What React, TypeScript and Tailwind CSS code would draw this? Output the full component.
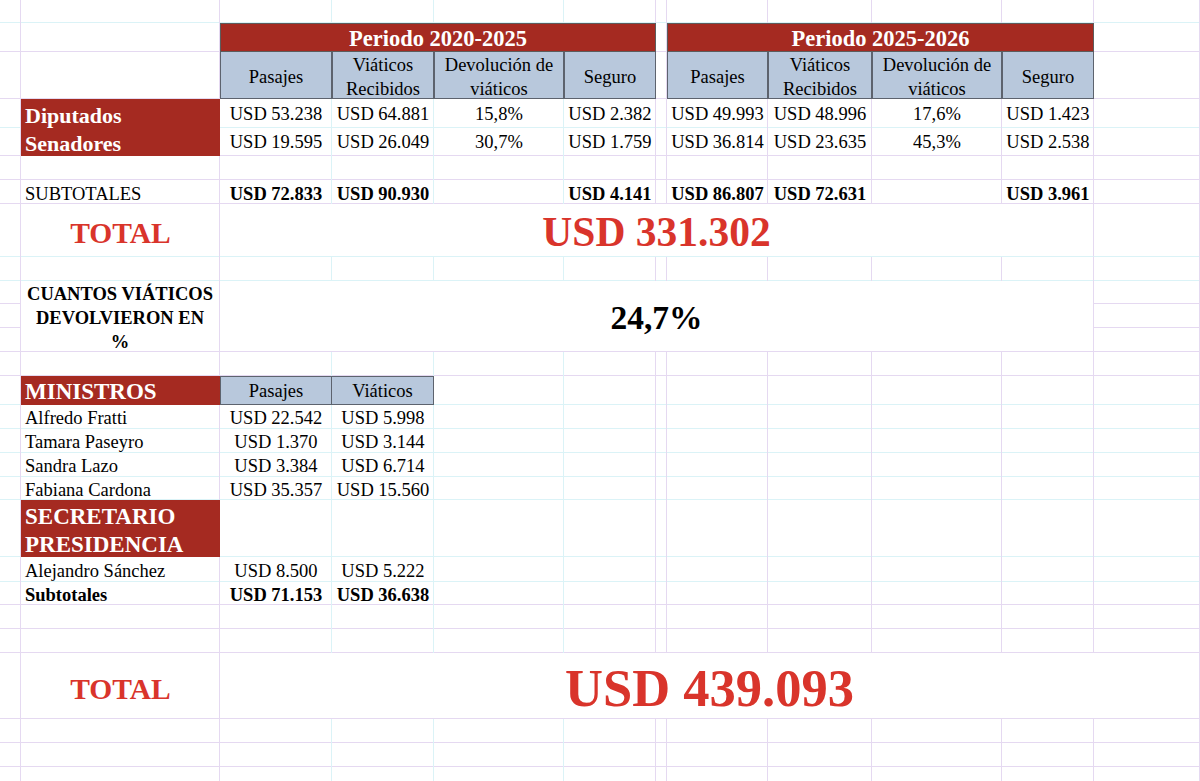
// Hoja de cálculo: viáticos y pasajes de legisladores y ministros.

const RED = "bg-[#a52a21]";

// color de la línea de cuadrícula de cada fila / columna (p = lila, c = celeste)
const ROW_LINES = "cppcpppccppppcccccccppppppp".split("");
const COL_LINES = "ppcccppppppp".split("");

const HEADERS = [["Pasajes"], ["Viáticos", "Recibidos"], ["Devolución de", "viáticos"], ["Seguro"]];

type Period = {
  title: string;
  grid: string;
  rows: string[][];
  totals: string[];
};

const PERIODS: Period[] = [
  {
    title: "Periodo 2020-2025",
    grid: "col-[3/7] row-[2/8] grid grid-cols-[112px_102px_130px_92px] grid-rows-[29px_47px_29px_28px_24px_24px]",
    rows: [
      ["USD 53.238", "USD 64.881", "15,8%", "USD 2.382"],
      ["USD 19.595", "USD 26.049", "30,7%", "USD 1.759"],
    ],
    totals: ["USD 72.833", "USD 90.930", "", "USD 4.141"],
  },
  {
    title: "Periodo 2025-2026",
    grid: "col-[8/12] row-[2/8] grid grid-cols-[101px_104px_130px_92px] grid-rows-[29px_47px_29px_28px_24px_24px]",
    rows: [
      ["USD 49.993", "USD 48.996", "17,6%", "USD 1.423"],
      ["USD 36.814", "USD 23.635", "45,3%", "USD 2.538"],
    ],
    totals: ["USD 86.807", "USD 72.631", "", "USD 3.961"],
  },
];

const MINISTROS = [
  ["Alfredo Fratti", "USD 22.542", "USD 5.998"],
  ["Tamara Paseyro", "USD 1.370", "USD 3.144"],
  ["Sandra Lazo", "USD 3.384", "USD 6.714"],
  ["Fabiana Cardona", "USD 35.357", "USD 15.560"],
];

function PeriodBlock({ title, grid, rows, totals }: Period) {
  return (
    <div className={grid}>
      <div
        className={joinClasses(
          "col-span-4 flex items-center justify-center border border-[#5c5c5c] pt-[3px] text-[22.5px] font-bold text-white",
          RED,
        )}
      >
        {title}
      </div>
      {HEADERS.map((lines) => (
        <div
          key={lines[0]}
          className="flex flex-col items-center justify-center border-x border-b border-[#5d636e] bg-[#b8c8dc] pt-[3px] leading-[24px]"
        >
          {lines.map((l) => (
            <span key={l}>{l}</span>
          ))}
        </div>
      ))}
      {rows.flat().map((v, i) => (
        <div key={i} className="flex items-center justify-center whitespace-nowrap pt-[2px]">
          {v}
        </div>
      ))}
      <div className="col-span-4" />
      {totals.map((v, i) => (
        <div key={i} className="flex items-center justify-center whitespace-nowrap pt-[5px] font-bold">
          {v}
        </div>
      ))}
    </div>
  );
}

export default function App() {
  return (
    <div className="h-[781px] w-[1200px] overflow-hidden bg-white font-['Liberation_Serif','Times_New_Roman',serif] text-[18.5px] text-black">
      <div className="grid h-[791px] grid-cols-[21px_199px_112px_102px_130px_92px_11px_101px_104px_130px_92px_106px] grid-rows-[23px_29px_47px_29px_28px_24px_24px_53px_24px_23px_24px_24px_24px_29px_24px_24px_24px_23px_57px_25px_23px_24px_24px_66px_24px_24px_24px]">
        {/* cuadrícula */}
        {ROW_LINES.map((t, i) => (
          <div
            key={"r" + i}
            className={joinClasses("col-[1/-1] border-b", t === "p" ? "border-b-[#e5d9f1]" : "border-b-[#dbf3f7]")}
            style={{ gridRow: i + 1 }}
          />
        ))}
        {COL_LINES.map((t, i) => (
          <div
            key={"c" + i}
            className={joinClasses("row-[1/-1] border-r", t === "p" ? "border-r-[#e5d9f1]" : "border-r-[#dbf3f7]")}
            style={{ gridColumn: i + 1 }}
          />
        ))}

        {/* legisladores */}
        <div className={joinClasses("col-[2/3] row-[4/5] flex items-center pl-1 pt-[3px] text-[22px] font-bold text-white", RED)}>
          Diputados
        </div>
        <div className={joinClasses("col-[2/3] row-[5/6] flex items-center pl-1 pt-[3px] text-[22px] font-bold text-white", RED)}>
          Senadores
        </div>
        {PERIODS.map((p) => (
          <PeriodBlock key={p.title} {...p} />
        ))}
        <div className="col-[2/3] row-[7/8] flex items-center pl-1 pt-[5px]">SUBTOTALES</div>

        <div className="col-[2/3] row-[8/9] flex items-center justify-center pt-[5px] text-[29.5px] font-bold text-[#d9342b]">
          TOTAL
        </div>
        <div className="col-[3/12] row-[8/9] flex items-center justify-center border-r border-b border-r-[#e5d9f1] border-b-[#dbf3f7] bg-white pt-[5px] text-[41.5px] font-bold text-[#d9342b]">
          USD 331.302
        </div>

        <div className="col-[2/3] row-[10/13] flex items-center justify-center border-r border-b border-[#e5d9f1] bg-white pt-[4px] text-center font-bold leading-[24px]">
          CUANTOS VIÁTICOS
          <br />
          DEVOLVIERON EN
          <br />%
        </div>
        <div className="col-[3/12] row-[10/13] flex items-center justify-center border-r border-b border-[#e5d9f1] bg-white pt-[4px] text-[33.5px] font-bold">
          24,7%
        </div>

        {/* ministros */}
        <div className="col-[2/5] row-[14/22] grid grid-cols-[199px_112px_102px] grid-rows-[29px_24px_24px_24px_23px_57px_25px_23px]">
          <div className={joinClasses("flex items-center pl-1 pt-[4px] text-[23px] font-bold text-white", RED)}>MINISTROS</div>
          <div className="flex items-center justify-center border border-[#5d636e] bg-[#b8c8dc] pt-[3px]">Pasajes</div>
          <div className="flex items-center justify-center border border-l-0 border-[#5d636e] bg-[#b8c8dc] pt-[3px]">
            Viáticos
          </div>
          {MINISTROS.flat().map((v, i) => (
            <div
              key={i}
              className={joinClasses("flex items-center whitespace-nowrap pt-[4px]", i % 3 === 0 ? "pl-1" : "justify-center")}
            >
              {v}
            </div>
          ))}
          <div
            className={joinClasses(
              "flex flex-col justify-center pl-1 pt-[4px] text-[23px] font-bold leading-[28px] text-white",
              RED,
            )}
          >
            <span>SECRETARIO</span>
            <span>PRESIDENCIA</span>
          </div>
          <div />
          <div />
          <div className="flex items-center pl-1 pt-[4px]">Alejandro Sánchez</div>
          <div className="flex items-center justify-center pt-[4px]">USD 8.500</div>
          <div className="flex items-center justify-center pt-[4px]">USD 5.222</div>
          <div className="flex items-center pl-1 pt-[4px] font-bold">Subtotales</div>
          <div className="flex items-center justify-center whitespace-nowrap pt-[4px] font-bold">USD 71.153</div>
          <div className="flex items-center justify-center whitespace-nowrap pt-[4px] font-bold">USD 36.638</div>
        </div>

        <div className="col-[2/3] row-[24/25] flex items-center justify-center pt-[6px] text-[29.5px] font-bold text-[#d9342b]">
          TOTAL
        </div>
        <div className="col-[3/13] row-[24/25] flex items-center justify-center border-r border-b border-[#e5d9f1] bg-white pt-[6px] text-[52.5px] font-bold text-[#d9342b]">
          USD 439.093
        </div>
      </div>
    </div>
  );
}

function joinClasses(...classes: Array<string | false | null | undefined>): string {
  return classes.filter(Boolean).join(" ");
}
